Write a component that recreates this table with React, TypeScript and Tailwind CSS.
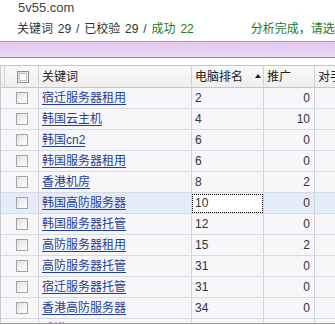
import React from 'react';

type Row = {
  keyword: string;
  rank: string;
  promo: string;
  selected?: boolean;
};

const rows: Row[] = [
  { keyword: '宿迁服务器租用', rank: '2', promo: '0' },
  { keyword: '韩国云主机', rank: '4', promo: '10' },
  { keyword: '韩国cn2', rank: '6', promo: '0' },
  { keyword: '韩国服务器租用', rank: '6', promo: '0' },
  { keyword: '香港机房', rank: '8', promo: '2' },
  { keyword: '韩国高防服务器', rank: '10', promo: '0', selected: true },
  { keyword: '韩国服务器托管', rank: '12', promo: '0' },
  { keyword: '高防服务器租用', rank: '15', promo: '2' },
  { keyword: '高防服务器托管', rank: '31', promo: '0' },
  { keyword: '宿迁服务器托管', rank: '31', promo: '0' },
  { keyword: '香港高防服务器', rank: '34', promo: '0' },
  { keyword: '香港vps', rank: '51', promo: '0' },
];

const Checkbox: React.FC<{ header?: boolean }> = ({ header }) => (
  <span
    className={
      header
        ? 'block h-[12px] w-[12px] border border-[#8e8f8f] bg-gradient-to-br from-[#dcdcdc] to-[#fafafa] p-[1px]'
        : 'block h-[12px] w-[12px] border border-[#a4a4a4] bg-gradient-to-br from-[#e2e2e2] to-[#ffffff]'
    }
  >
    {header && <span className="block h-full w-full border border-[#b8c4dc] bg-white" />}
  </span>
);

const App: React.FC = () => {
  return (
    <div
      className="h-[325px] w-[335px] overflow-hidden bg-white text-[12px] text-[#333]"
      style={{ fontFamily: '"Liberation Sans", "Noto Sans CJK SC", sans-serif' }}
    >
      <div className="flex h-[14px] items-center pl-[18px] text-[13px] leading-none text-[#444]">5v55.com</div>
      <div className="flex h-[27px] items-center whitespace-nowrap pl-[17px] pt-[2px] leading-none [word-spacing:1.5px]">
        <span>关键词 29 / 已校验 29 / </span>
        <span className="ml-[5px] text-[#1b7a1b]">成功 22</span>
        <span className="ml-[57px] text-[#1b7a1b]">分析完成，请选择</span>
      </div>

      <div className="h-[17px] border-y border-t-[#a2a2a2] border-b-[#8c8c8c] bg-gradient-to-b from-[#e3c8ef] to-[#ebd8f3]" />

      <div className="mt-[7px] h-[259px] overflow-hidden border-b border-l border-b-[#9a9a9a] border-l-[#c9c9d2]">
        <div className="flex h-[23px] w-[400px] border-y border-y-[#c6c6ce] bg-gradient-to-b from-[#f9f9f9] to-[#eeeeee] leading-none text-[#222]">
          <div className="w-[4px] border-r border-[#cfcfd6]" />
          <div className="flex w-[34px] items-center justify-center border-r border-[#cfcfd6] pl-[2px]">
            <Checkbox header />
          </div>
          <div className="flex w-[153px] items-center border-r border-[#cfcfd6] pl-[3px]">关键词</div>
          <div className="flex w-[72px] items-center border-r border-[#cfcfd6] pl-[3px]">
            <span>电脑排名</span>
            <span className="ml-[12px] mt-[-1px] h-0 w-0 border-x-[3px] border-b-[4px] border-x-transparent border-b-[#222]" />
          </div>
          <div className="flex w-[51px] items-center border-r border-[#cfcfd6] pl-[3px]">推广</div>
          <div className="flex w-[60px] items-center pl-[3px]">对手</div>
        </div>

        {rows.map((row) => (
          <div
            key={row.keyword}
            className={
              row.selected
                ? 'flex h-[21px] w-[400px] border-b border-[#d9d9e2] bg-[#e4ecfa] leading-none'
                : 'flex h-[21px] w-[400px] border-b border-[#d9d9e2] bg-[#f7f6f9] leading-none'
            }
          >
            <div className="flex w-[38px] items-center justify-center border-r border-[#d3d3dc] pl-[5px]">
              <Checkbox />
            </div>
            <div className="flex w-[153px] items-center border-r border-[#d3d3dc] pl-[3px]">
              <a href="#" className="text-[#1f3f98] underline underline-offset-[2px]">
                {row.keyword}
              </a>
            </div>
            <div className="flex w-[72px] items-center border-r border-[#d3d3dc]">
              {row.selected ? (
                <div className="flex h-[19px] w-full items-center border border-dotted border-black bg-white pl-[2px]">
                  {row.rank}
                </div>
              ) : (
                <span className="pl-[3px]">{row.rank}</span>
              )}
            </div>
            <div className="flex w-[51px] items-center justify-end border-r border-[#d3d3dc] pr-[4px]">{row.promo}</div>
            <div className="w-[60px]" />
          </div>
        ))}
      </div>
    </div>
  );
};

export default App;
